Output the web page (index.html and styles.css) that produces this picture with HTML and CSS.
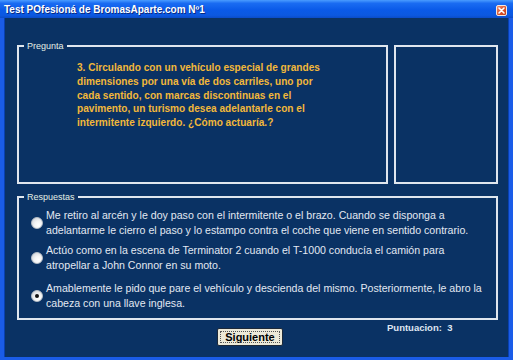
FILE: index.html
```html
<!DOCTYPE html>
<html lang="es">
<head>
<meta charset="utf-8">
<title>Test</title>
<link rel="stylesheet" href="styles.css">
</head>
<body>
<div class="window">
  <div class="titlebar">
    <span class="title">Test POfesioná de BromasAparte.com Nº1</span>
    <span class="close" aria-label="Cerrar">
      <svg width="11" height="11" viewBox="0 0 11 11"><path d="M3 3 L8 8 M8 3 L3 8" stroke="#fff" stroke-width="1.6" stroke-linecap="round"/></svg>
    </span>
  </div>
  <div class="client">
    <div class="top-row">
      <fieldset class="group pregunta">
        <legend>Pregunta</legend>
        <p class="question">3. Circulando con un vehículo especial de grandes<br>dimensiones por una vía de dos carriles, uno por<br>cada sentido, con marcas discontinuas en el<br>pavimento, un turismo desea adelantarle con el<br>intermitente izquierdo. ¿Cómo actuaría.?</p>
      </fieldset>
      <div class="imagebox"></div>
    </div>
    <fieldset class="group respuestas">
      <legend>Respuestas</legend>
      <div class="option">
        <span class="radio"></span>
        <p class="answer">Me retiro al arcén y le doy paso con el intermitente o el brazo. Cuando se disponga a<br>adelantarme le cierro el paso y lo estampo contra el coche que viene en sentido contrario.</p>
      </div>
      <div class="option">
        <span class="radio"></span>
        <p class="answer">Actúo como en la escena de Terminator 2 cuando el T-1000 conducía el camión para<br>atropellar a John Connor en su moto.</p>
      </div>
      <div class="option option-last">
        <span class="radio checked"></span>
        <p class="answer">Amablemente le pido que pare el vehículo y descienda del mismo. Posteriormente, le abro la<br>cabeza con una llave inglesa.</p>
      </div>
    </fieldset>
    <div class="footer">
      <button class="btn">Siguiente</button>
      <span class="score">Puntuacion:&nbsp; 3</span>
    </div>
  </div>
</div>
</body>
</html>
```
FILE: styles.css
```css
* { box-sizing: border-box; }
html, body { margin: 0; padding: 0; }
body { width: 513px; height: 360px; overflow: hidden; background: #0a3264; }

.window {
  width: 513px;
  height: 360px;
  display: flex;
  flex-direction: column;
  background: #0a3264;
}

.titlebar {
  height: 18px;
  flex: none;
  display: flex;
  align-items: center;
  justify-content: space-between;
  padding: 0 6px 0 4px;
  background: linear-gradient(#4a9cff 0%, #1a6cf2 18%, #0a5ae8 55%, #0c58e0 85%, #0a4cc8 100%);
}
.title {
  font-family: "Liberation Sans", Arial, sans-serif;
  font-weight: bold;
  font-size: 10px;
  color: #fff;
  text-shadow: 1px 1px 0 #0a2a80;
  letter-spacing: 0;
}
.close {
  width: 11px;
  height: 11px;
  margin-top: 2px;
  display: flex;
  border: 1px solid #f4e8e0;
  border-radius: 2px;
  background: linear-gradient(135deg, #f09070, #d84e28 60%, #c03c18);
}
.close svg { display: block; margin: -1px; }

.client {
  flex: 1;
  display: flex;
  flex-direction: column;
  border-left: 4px solid #1a5ce8;
  border-right: 4px solid #1a5ce8;
  border-bottom: 3px solid #1a5ce8;
  box-shadow: inset 1px 0 0 #0840b0, inset -1px 0 0 #0840b0;
  padding: 23px 11px 0 13px;
}

.top-row {
  display: flex;
  gap: 6px;
  height: 143px;
}

.group {
  margin: 0;
  padding: 0;
  min-width: 0;
  border: 2px solid #dfe6ee;
}
.group legend {
  margin-left: 5px;
  padding: 0 3px;
  font-family: "Liberation Sans", Arial, sans-serif;
  font-size: 9px;
  line-height: 10px;
  color: #e4f0e4;
}

.pregunta {
  width: 371px;
  height: 143px;
}
.question {
  margin: 10px 0 0 58px;
  font-family: "Liberation Sans", Arial, sans-serif;
  font-weight: bold;
  font-size: 10.1px;
  line-height: 13.75px;
  color: #f2b83a;
}

.imagebox {
  margin-top: 4px;
  width: 104px;
  height: 139px;
  border: 2px solid #dfe6ee;
}

.respuestas {
  margin-top: 8px;
  height: 128px;
}
.option {
  display: flex;
  align-items: center;
  margin-top: 5px;
}
.option:first-of-type { margin-top: 6px; }
.option-last { margin-top: 8px; }

.radio {
  flex: none;
  width: 12px;
  height: 12px;
  margin-left: 12px;
  margin-right: 3px;
  border-radius: 50%;
  border: 1px solid #b8c0c8;
  background: radial-gradient(circle at 65% 70%, #ffffff 0%, #f4f4f4 40%, #c8ccd4 100%);
  display: flex;
  align-items: center;
  justify-content: center;
}
.radio.checked::after {
  content: "";
  width: 4px;
  height: 4px;
  border-radius: 50%;
  background: #111;
}

.answer {
  margin: 0;
  font-family: "Liberation Sans", Arial, sans-serif;
  font-size: 10.6px;
  line-height: 15px;
  color: #e2e8f2;
  white-space: nowrap;
}

.footer {
  display: flex;
  align-items: flex-start;
  padding-left: 200px;
}
.btn {
  margin-top: 8px;
  width: 66px;
  height: 18px;
  padding: 0;
  background: #ece9d8;
  border: 1px solid #1c2838;
  border-radius: 2px;
  outline: 1px dotted #555;
  outline-offset: -4px;
  font-family: "Liberation Sans", Arial, sans-serif;
  font-weight: bold;
  font-size: 11px;
  color: #000;
}
.score {
  margin-left: 104px;
  margin-top: 2px;
  font-family: "Liberation Sans", Arial, sans-serif;
  font-weight: bold;
  font-size: 9.5px;
  color: #dfe6f2;
}
```
